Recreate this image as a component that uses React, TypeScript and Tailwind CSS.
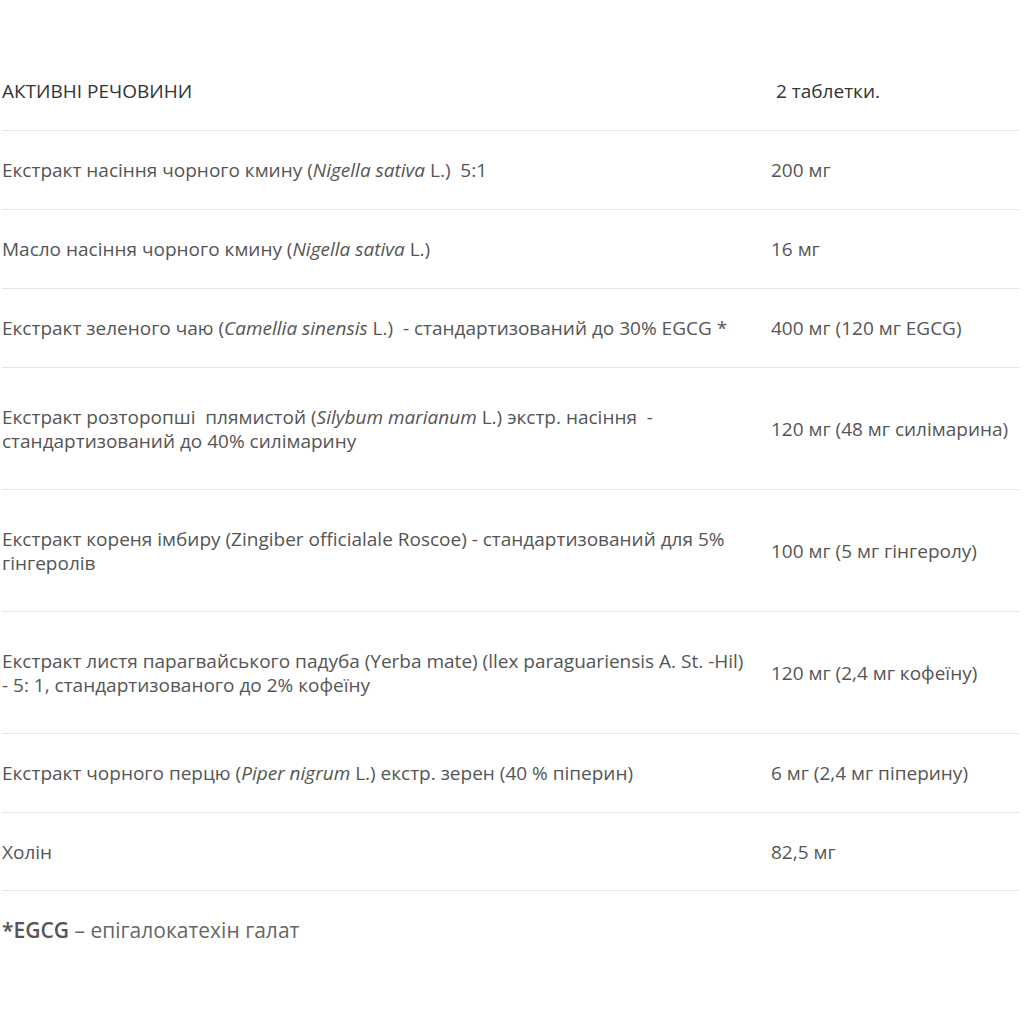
import React from "react";

type Row = { left: React.ReactNode; right: React.ReactNode; h: string };

const rows: Row[] = [
  {
    h: "h-[79px]",
    left: (
      <>
        Екстракт насіння чорного кмину (<i>Nigella sativa</i> L.)&nbsp; 5:1
      </>
    ),
    right: "200 мг",
  },
  {
    h: "h-[79px]",
    left: (
      <>
        Масло насіння чорного кмину (<i>Nigella sativa</i> L.)
      </>
    ),
    right: "16 мг",
  },
  {
    h: "h-[79px]",
    left: (
      <>
        Екстракт зеленого чаю (<i>Camellia sinensis</i> L.)&nbsp; - стандартизований до 30% EGCG *
      </>
    ),
    right: "400 мг (120 мг EGCG)",
  },
  {
    h: "h-[122px]",
    left: (
      <>
        Екстракт розторопші&nbsp; плямистой (<i>Silybum marianum</i> L.) экстр. насіння&nbsp; -
        <br />
        стандартизований до 40% силімарину
      </>
    ),
    right: "120 мг (48 мг силімарина)",
  },
  {
    h: "h-[122px]",
    left: (
      <>
        Екстракт кореня імбиру (Zingiber officialale Roscoe) - стандартизований для 5%
        <br />
        гінгеролів
      </>
    ),
    right: "100 мг (5 мг гінгеролу)",
  },
  {
    h: "h-[122px]",
    left: (
      <>
        Екстракт листя парагвайського падуба (Yerba mate) (llex paraguariensis A. St. -Hil)
        <br />- 5: 1, стандартизованого до 2% кофеїну
      </>
    ),
    right: "120 мг (2,4 мг кофеїну)",
  },
  {
    h: "h-[79px]",
    left: (
      <>
        Екстракт чорного перцю (<i>Piper nigrum</i> L.) екстр. зерен (40 % піперин)
      </>
    ),
    right: "6 мг (2,4 мг піперину)",
  },
  {
    h: "h-[78px]",
    left: <>Холін</>,
    right: "82,5 мг",
  },
];

export default function App() {
  return (
    <div
      className="min-h-[1024px] w-[1024px] bg-white pt-[52px] text-[#555555]"
      style={{ fontFamily: '"Open Sans", "Noto Sans", sans-serif' }}
    >
      <div className="ml-[2px] w-[1018px]">
        <div className="flex h-[79px] items-center border-b border-[#e6e6e6] text-[19px] leading-6 text-[#333333]">
          <div className="w-[769px] shrink-0">АКТИВНІ РЕЧОВИНИ</div>
          <div className="pl-[5px] font-medium">2 таблетки.</div>
        </div>
        {rows.map((r, i) => (
          <div
            key={i}
            className={`flex ${r.h} items-center border-b border-[#e6e6e6] text-[19px] leading-6`}
          >
            <div className="w-[769px] shrink-0 whitespace-nowrap">{r.left}</div>
            <div className="whitespace-nowrap">{r.right}</div>
          </div>
        ))}
        <div className="mt-[25px] text-[21px] leading-7 text-[#666666]">
          <span className="font-semibold text-[#555555]">*EGCG</span> – епігалокатехін галат
        </div>
      </div>
    </div>
  );
}
